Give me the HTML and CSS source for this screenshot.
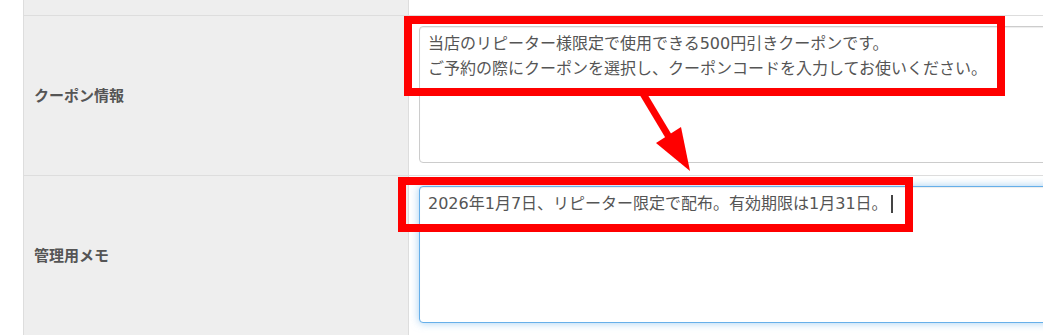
FILE: index.html
```html
<!DOCTYPE html>
<html lang="ja">
<head>
  <meta charset="UTF-8">
  <meta name="viewport" content="width=device-width, initial-scale=1.0">
  <title>クーポン編集</title>
  <link rel="stylesheet" href="styles.css">
</head>
<body>
  <div class="page">
    <div class="form">
      <div class="form-row row-prev">
        <div class="form-label"></div>
        <div class="form-value"></div>
      </div>
      <div class="form-row">
        <div class="form-label">クーポン情報</div>
        <div class="form-value">
          <textarea class="form-control" readonly>当店のリピーター様限定で使用できる500円引きクーポンです。
ご予約の際にクーポンを選択し、クーポンコードを入力してお使いください。</textarea>
        </div>
      </div>
      <div class="form-row">
        <div class="form-label">管理用メモ</div>
        <div class="form-value">
          <div class="form-control is-focus">2026年1月7日、リピーター限定で配布。有効期限は1月31日。<span class="caret"></span></div>
        </div>
      </div>
    </div>

    <svg class="annotations" width="1043" height="336" viewBox="0 0 1043 336">
      <rect x="408" y="20" width="593" height="72" />
      <rect x="402" y="181" width="507" height="47" />
      <line x1="642" y1="92" x2="669" y2="137" />
      <polygon points="656,143 681,127 690,171" />
    </svg>
  </div>
</body>
</html>
```

FILE: styles.css
```css
body {
  margin: 0;
  padding: 0;
  background: #fff;
  font-family: "DejaVu Sans", "Noto Sans CJK JP", sans-serif;
  overflow: hidden;
}
.page {
  position: relative;
  width: 1043px;
  height: 336px;
  overflow: hidden;
}
.form {
  margin-left: 23px;
  width: 1300px;
}
.form-row {
  display: flex;
  border-top: 1px solid #ddd;
}
.row-prev {
  border-top: none;
  height: 15px;
}
.form-label {
  width: 386px;
  flex-shrink: 0;
  box-sizing: border-box;
  display: flex;
  align-items: center;
  padding: 0 10px 3px;
  background-color: #eee;
  border-left: 1px solid #ddd;
  border-right: 1px solid #ddd;
  color: #555;
  font-family: "Noto Sans CJK JP", sans-serif;
  font-size: 15px;
  font-weight: bold;
}
.form-value {
  flex: 1;
  padding: 10px 10px 12px;
}
.row-prev .form-value {
  padding: 0;
}
.form-control {
  display: block;
  box-sizing: border-box;
  width: 100%;
  height: 137px;
  margin: 0;
  padding: 4px 8px;
  border: 1px solid #ccc;
  border-radius: 4px;
  background: #fff;
  color: #555;
  font-family: "DejaVu Sans", "Noto Sans CJK JP", sans-serif;
  font-size: 16px;
  line-height: 25px;
  resize: none;
  outline: none;
  box-shadow: inset 0 1px 1px rgba(0, 0, 0, .075);
}
.form-control.is-focus {
  border-color: #66afe9;
  box-shadow: inset 0 1px 1px rgba(0, 0, 0, .075), 0 0 8px rgba(102, 175, 233, .6);
}
.caret {
  display: inline-block;
  width: 2px;
  height: 18px;
  margin-left: 3px;
  vertical-align: -4px;
  background: #444;
}
.annotations {
  position: absolute;
  top: 0;
  left: 0;
  pointer-events: none;
}
.annotations rect {
  fill: none;
  stroke: #ff0000;
  stroke-width: 8;
}
.annotations line {
  stroke: #ff0000;
  stroke-width: 7;
}
.annotations polygon {
  fill: #ff0000;
}
```
